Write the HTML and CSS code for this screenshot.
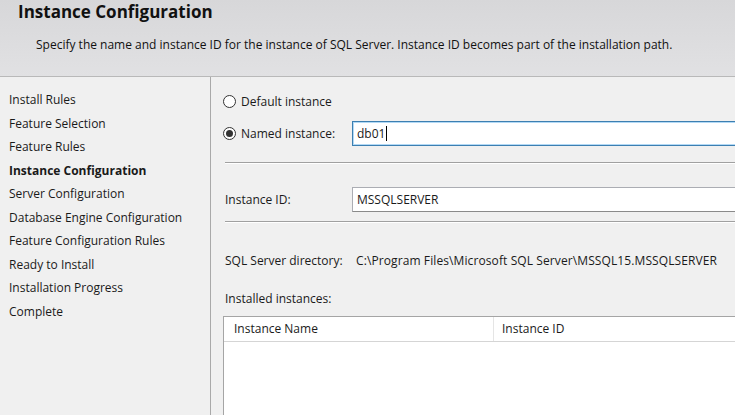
FILE: index.html
```html
<!DOCTYPE html>
<html>
<head>
<meta charset="utf-8">
<link rel="stylesheet" href="styles.css">
</head>
<body>
<div class="page">
  <header class="header">
    <h1 class="title">Instance Configuration</h1>
    <p class="subtitle">Specify the name and instance ID for the instance of SQL Server. Instance ID becomes part of the installation path.</p>
  </header>
  <div class="body">
    <nav class="sidebar">
      <div class="step">Install Rules</div>
      <div class="step">Feature Selection</div>
      <div class="step">Feature Rules</div>
      <div class="step active">Instance Configuration</div>
      <div class="step">Server Configuration</div>
      <div class="step">Database Engine Configuration</div>
      <div class="step">Feature Configuration Rules</div>
      <div class="step">Ready to Install</div>
      <div class="step">Installation Progress</div>
      <div class="step">Complete</div>
    </nav>
    <main class="main">
      <div class="row radio-row default-row">
        <span class="radio"></span>
        <span class="radio-label">Default instance</span>
      </div>
      <div class="row named-row">
        <div class="radio-group">
          <span class="radio checked"><span class="dot"></span></span>
          <span class="radio-label">Named instance:</span>
        </div>
        <div class="textbox focused"><span class="value">db01</span><span class="caret"></span></div>
      </div>
      <div class="sep sep1"></div>
      <div class="row id-row">
        <span class="label">Instance ID:</span>
        <div class="textbox"><span class="value">MSSQLSERVER</span></div>
      </div>
      <div class="sep sep2"></div>
      <div class="row dir-row">
        <span class="label dir-label">SQL Server directory:</span>
        <span class="dir-value">C:\Program Files\Microsoft SQL Server\MSSQL15.MSSQLSERVER</span>
      </div>
      <div class="installed-label">Installed instances:</div>
      <div class="table">
        <div class="thead">
          <div class="th col-name">Instance Name</div>
          <div class="th col-id">Instance ID</div>
          <div class="th col-rest"></div>
        </div>
        <div class="tbody"></div>
      </div>
    </main>
  </div>
</div>
</body>
</html>
```
FILE: styles.css
```css
html, body {
  margin: 0;
  padding: 0;
  overflow: hidden;
  background: #f0f0f0;
}
body {
  width: 735px;
  height: 415px;
  font-family: "Open Sans", "Noto Sans", sans-serif;
  font-size: 12px;
  color: #1a1a1a;
}
.page {
  width: 735px;
  height: 415px;
  overflow: hidden;
  display: flex;
  flex-direction: column;
}
.header {
  height: 77px;
  flex: none;
  box-sizing: border-box;
  background: linear-gradient(#d7d7d9, #e1e1e3);
  border-bottom: 1px solid #b9b9b9;
  padding: 1px 0 0 18px;
}
.title {
  margin: 0;
  font-size: 17px;
  font-weight: 700;
  line-height: 22px;
  color: #111;
}
.subtitle {
  margin: 13px 0 0 18px;
  line-height: 18px;
  color: #111;
}
.body {
  flex: 1;
  display: flex;
  min-height: 0;
}
.sidebar {
  width: 211px;
  flex: none;
  box-sizing: border-box;
  border-right: 1px solid #a9a9a9;
  padding: 11px 0 0 9px;
}
.step {
  height: 23.5px;
  line-height: 23.5px;
  white-space: nowrap;
}
.step.active {
  font-weight: 700;
}
.main {
  width: 640px;
  flex: none;
  padding: 14px 0 0 12px;
  box-sizing: border-box;
}
.row {
  display: flex;
  align-items: center;
}
.default-row {
  height: 20px;
}
.radio {
  width: 11px;
  height: 11px;
  border: 1px solid #333;
  border-radius: 50%;
  background: #fff;
  display: flex;
  align-items: center;
  justify-content: center;
  flex: none;
}
.dot {
  width: 7px;
  height: 7px;
  border-radius: 50%;
  background: #333;
}
.radio-label {
  margin-left: 5px;
}
.named-row {
  margin-top: 10px;
  height: 25px;
}
.radio-group {
  display: flex;
  align-items: center;
  width: 129px;
  flex: none;
}
.textbox {
  box-sizing: border-box;
  height: 25px;
  width: 460px;
  background: #fff;
  border: 1px solid #abadb3;
  border-bottom-color: #8a8a8a;
  display: flex;
  align-items: center;
  padding-left: 4px;
}
.textbox.focused {
  border-color: #3c7fb1;
  box-shadow: inset 0 0 0 1px #b3d9f5;
}
.caret {
  width: 1px;
  height: 15px;
  background: #000;
  margin-left: 1px;
}
.sep {
  height: 0;
  border-top: 1px solid #a0a0a0;
  border-bottom: 1px solid #fff;
  margin-left: 2px;
}
.sep1 {
  margin-top: 16px;
}
.id-row {
  margin-top: 23px;
  height: 25px;
}
.label {
  width: 127px;
  flex: none;
  padding-left: 2px;
}
.sep2 {
  margin-top: 9px;
}
.dir-row {
  margin-top: 28px;
  height: 18px;
}
.dir-label {
  width: 129px;
}
.dir-value {
  padding-left: 2px;
  white-space: nowrap;
  letter-spacing: 0.1px;
}
.installed-label {
  margin-top: 21px;
  height: 18px;
  line-height: 18px;
  padding-left: 2px;
}
.table {
  margin-top: 8px;
  width: 600px;
  height: 200px;
  background: #fff;
  border: 1px solid #a5a5a5;
  box-sizing: border-box;
}
.thead {
  display: flex;
  height: 24px;
  border-bottom: 1px solid #d5d5d5;
}
.th {
  box-sizing: border-box;
  line-height: 24px;
  padding-left: 10px;
  border-right: 1px solid #e5e5e5;
}
.col-name {
  width: 270px;
  flex: none;
}
.col-id {
  width: 300px;
  flex: none;
  padding-left: 8px;
}
.col-rest {
  flex: 1;
  border-right: none;
}
```
